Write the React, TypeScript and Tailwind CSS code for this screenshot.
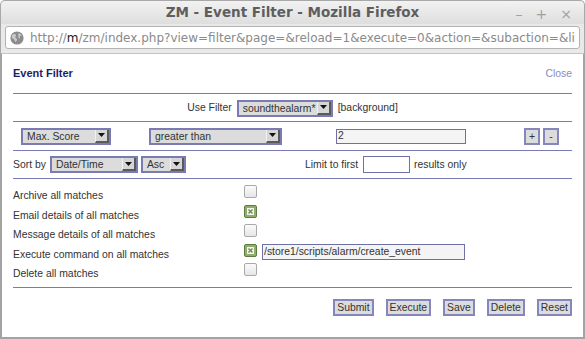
import React from 'react';

const purple = 'border-[#7b7bb3]';

const Arrow = (): JSX.Element => (
  <span className="flex w-[14px] items-center justify-center border-l border-b-2 border-r-2 border-l-[#f2f2f2] border-b-[#5a5a5a] border-r-[#5a5a5a] bg-[#d6d6d6]">
    <svg width="7" height="4" viewBox="0 0 7 4">
      <path d="M0 0h7L3.5 4z" fill="#111" />
    </svg>
  </span>
);

const Select = ({ label, className }: { label: string; className: string }): JSX.Element => (
  <div className={`flex h-[17px] border-2 ${purple} bg-[#dcdcdc] ${className}`}>
    <span className="flex-1 overflow-hidden whitespace-nowrap pl-[4px] leading-[13px] text-[#333]">{label}</span>
    <Arrow />
  </div>
);

const Check = ({ on }: { on?: boolean }): JSX.Element =>
  on ? (
    <span className="flex h-[13px] w-[13px] items-center justify-center rounded-[2px] border border-[#5d7b40] bg-[#8fae6c]">
      <span className="flex h-[7px] w-[7px] items-center justify-center bg-[#f3f6ee]">
        <svg width="5" height="5" viewBox="0 0 5 5">
          <path d="M0.5 0.5l4 4M4.5 0.5l-4 4" stroke="#6b8a4c" strokeWidth="1.4" />
        </svg>
      </span>
    </span>
  ) : (
    <span className="block h-[13px] w-[13px] rounded-[2px] border border-[#a9a9a9] bg-gradient-to-b from-[#fbfbfb] to-[#e6e6e6]" />
  );

const Btn = ({ label, className = '' }: { label: string; className?: string }): JSX.Element => (
  <button
    className={`h-[17px] border-2 border-[#8686bf] bg-[#dcdcdc] px-[2px] leading-[13px] text-[#333] ${className}`}
  >
    {label}
  </button>
);

const Hr = (): JSX.Element => <div className="h-px bg-[#7b7bb3]" />;

const rows: { label: string; on?: boolean; cmd?: string }[] = [
  { label: 'Archive all matches' },
  { label: 'Email details of all matches', on: true },
  { label: 'Message details of all matches' },
  { label: 'Execute command on all matches', on: true, cmd: '/store1/scripts/alarm/create_event' },
  { label: 'Delete all matches' },
];

export default function App(): JSX.Element {
  return (
    <div className="flex h-[339px] w-[585px] flex-col overflow-hidden bg-white">
      {/* window title */}
      <div className="relative flex h-[24px] items-center justify-center rounded-t-[5px] border border-b-0 border-[#a8a8a8] bg-gradient-to-b from-[#f2f2f2] to-[#dedede]">
        <span className="font-['DejaVu_Sans',sans-serif] text-[13.5px] font-bold text-[#5e5e5e]">
          ZM - Event Filter - Mozilla Firefox
        </span>
        <div className="absolute right-[12px] top-[3px] flex gap-[13px] font-['DejaVu_Sans',sans-serif] text-[14px] text-[#a0a0a0]">
          <span>–</span>
          <span>+</span>
          <span>×</span>
        </div>
      </div>
      {/* url bar */}
      <div className="flex h-[29px] flex-col border-x border-[#a8a8a8] bg-[#e9e9e9] px-[4px] pt-[2px]">
        <div className="flex h-[23px] items-center overflow-hidden rounded-[3px] border border-[#b3b3b3] bg-white pl-[4px]">
          <svg width="14" height="14" viewBox="0 0 14 14" className="shrink-0">
            <circle cx="7" cy="7" r="6.6" fill="#8c8c8c" />
            <path d="M3 3.2c1.4-.6 2.6-.2 3 .8.3 1-1 1.3-.6 2.4.4 1 1.6.9 1.7 2.1.1 1-.9 1.6-1.5 2.8-.9-.8-.8-2-1.5-2.7-.7-.8-1.9-.8-2.3-2C1.5 5.6 2 4 3 3.2z" fill="#c9c9c9" />
            <path d="M8.6 2.2c1.3.1 2.6 1 3.2 2.2-.6.3-1.5 0-1.9.7-.4.7.4 1.4 0 2-.5.6-1.3.2-1.6-.5-.3-.9.5-1.5.1-2.4-.3-.8-.4-1.4.2-2z" fill="#c9c9c9" />
          </svg>
          <span className="whitespace-nowrap pl-[6px] font-['DejaVu_Sans',sans-serif] text-[12px] text-[#8a8a8a]">
            http://<span className="text-[#1a1a1a]">m</span>/zm/index.php?view=filter&amp;page=&amp;reload=1&amp;execute=0&amp;action=&amp;subaction=&amp;li
          </span>
        </div>
      </div>
      {/* page */}
      <div className="flex flex-1 flex-col border-x-2 border-b-2 border-t border-x-[#a3a3a3] border-b-[#a3a3a3] border-t-[#c4c4c4] px-[11px] font-['Liberation_Sans',Arial,sans-serif] text-[10.4px] text-[#333]">
        <div className="flex h-[39px] items-center justify-between">
          <span className="text-[11px] font-bold text-[#1e1e66]">Event Filter</span>
          <span className="text-[#8c8cbc]">Close</span>
        </div>
        <Hr />
        <div className="flex h-[27px] items-center justify-center gap-[5px] pt-px">
          <span>Use Filter</span>
          <Select label="soundthealarm*" className="w-[96px]" />
          <span>[background]</span>
        </div>
        <Hr />
        <div className="flex h-[28px] items-center">
          <Select label="Max. Score" className="ml-[8px] w-[90px]" />
          <Select label="greater than" className="ml-[38px] w-[133px]" />
          <input
            readOnly
            value="2"
            className="ml-[54px] h-[15px] w-[130px] border border-[#7070a8] bg-[#f4f4f4] px-[1px] text-[10.4px] text-[#333] outline-none"
          />
          <div className="ml-[58px] flex gap-[3px]">
            <Btn label="+" className="w-[16px]" />
            <Btn label="-" className="w-[16px]" />
          </div>
        </div>
        <Hr />
        <div className="flex h-[27px] items-center">
          <span>Sort by</span>
          <Select label="Date/Time" className="ml-[4px] w-[88px]" />
          <Select label="Asc" className="ml-[3px] w-[45px]" />
          <span className="ml-[119px]">Limit to first</span>
          <input readOnly className="ml-[5px] h-[17px] w-[47px] border border-[#7070a8] bg-white outline-none" />
          <span className="ml-[4px]">results only</span>
        </div>
        <Hr />
        <div className="flex flex-col pb-[6.5px] pt-[4px]">
          {rows.map((r) => (
            <div key={r.label} className="flex h-[19.5px] items-start">
              <span className="w-[231px] pt-[6px] leading-[13px]">{r.label}</span>
              <span className="pt-[2px]">
                <Check on={r.on} />
              </span>
              {r.cmd && (
                <input
                  readOnly
                  value={r.cmd}
                  className="ml-[5px] mt-[2px] h-[16px] w-[203px] border border-[#7070a8] bg-[#f4f4f4] px-[1px] text-[10.4px] text-[#333] outline-none"
                />
              )}
            </div>
          ))}
        </div>
        <Hr />
        <div className="flex justify-end gap-[12px] pt-[11px]">
          <Btn label="Submit" />
          <Btn label="Execute" />
          <Btn label="Save" />
          <Btn label="Delete" />
          <Btn label="Reset" />
        </div>
      </div>
    </div>
  );
}
